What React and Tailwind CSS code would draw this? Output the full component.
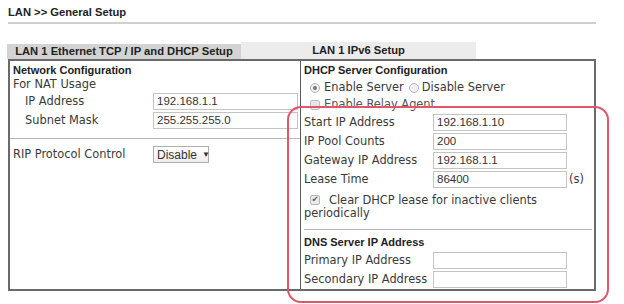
import React from "react";

const verd = { fontFamily: '"DejaVu Sans", Verdana, sans-serif' };
const ari = { fontFamily: '"Liberation Sans", Arial, sans-serif' };

function Input({ value = "", w = "w-[134px]" }) {
  return (
    <div
      className={`${w} h-[17px] border border-[#c4c4c4] bg-white flex items-center pl-[3px] text-[11.5px] text-[#333] leading-none`}
      style={ari}
    >
      {value}
    </div>
  );
}

function Radio({ checked }) {
  return (
    <span className="w-[10px] h-[10px] rounded-full border border-[#b5b5b5] bg-[#f1f1f1] flex items-center justify-center">
      {checked && <span className="w-[4px] h-[4px] rounded-full bg-[#777]" />}
    </span>
  );
}

function Row({ label, children, lw = "w-[129px]", indent = false }) {
  return (
    <div className="h-[19px] flex items-center">
      <div className={`${indent ? "pl-[12px]" : ""} ${lw} text-[11.4px] text-[#3a3a3a] whitespace-nowrap`} style={verd}>
        {label}
      </div>
      {children}
    </div>
  );
}

export default function App() {
  return (
    <div className="w-[624px] h-[304px] bg-white relative overflow-hidden" style={ari}>
      <div className="pl-[8px] pt-[3px] h-[22px] text-[11.2px] font-bold text-[#222] flex items-center">
        LAN &gt;&gt; General Setup
      </div>
      <div className="ml-[8px] w-[588px] h-[2px] bg-[#d0d0d0]" />
      <div className="h-[18px]" />
      {/* tabs */}
      <div className="flex items-end h-[17px] pl-[7px]">
        <div className="w-[234px] h-[15px] bg-[#d3d3d3] flex items-center justify-center text-[11.2px] font-bold text-[#222]">
          LAN 1 Ethernet TCP / IP and DHCP Setup
        </div>
        <div className="w-[235px] h-[17px] bg-[#ececec] flex items-center justify-center text-[11.2px] font-bold text-[#222]">
          LAN 1 IPv6 Setup
        </div>
      </div>
      {/* box */}
      <div className="ml-[8px] w-[588px] h-[232px] border-2 border-[#6a6a6a] flex">
        {/* left */}
        <div className="w-[291px] h-full border-r border-[#5a5a5a] flex flex-col">
          <div className="h-[17px] pl-[3px] pt-[1px] flex items-center text-[11px] font-bold text-[#222]">
            Network Configuration
          </div>
          <div className="h-[14px] pl-[3px] flex items-center text-[11.4px] text-[#3a3a3a]" style={verd}>
            For NAT Usage
          </div>
          <div className="pl-[3px]">
            <Row label="IP Address" indent lw="w-[140px]">
              <Input value="192.168.1.1" w="w-[145px]" />
            </Row>
            <Row label="Subnet Mask" indent lw="w-[140px]">
              <Input value="255.255.255.0" w="w-[145px]" />
            </Row>
          </div>
          <div className="mt-[8px] h-px bg-[#b8b8b8]" />
          <div className="pl-[3px] mt-[6px]">
            <Row label="RIP Protocol Control" lw="w-[140px]">
              <div
                className="w-[56px] h-[17px] border border-[#adadad] bg-gradient-to-b from-white to-[#eeeeee] flex items-center pl-[3px] gap-[5px] text-[12px] text-[#333]"
                style={ari}
              >
                Disable <span className="text-[8px]">▼</span>
              </div>
            </Row>
          </div>
        </div>
        {/* right */}
        <div className="flex-1 h-full flex flex-col pl-[3px]">
          <div className="h-[18px] flex items-center text-[11px] font-bold text-[#222]">
            DHCP Server Configuration
          </div>
          <div className="h-[18px] flex items-center pl-[6px] text-[11.4px] text-[#3a3a3a]" style={verd}>
            <Radio checked />
            <span className="ml-[4px]">Enable Server</span>
            <span className="ml-[5px]"><Radio /></span>
            <span className="ml-[3px]">Disable Server</span>
          </div>
          <div className="h-[16px] flex items-center pl-[6px] text-[11.4px] text-[#555]" style={verd}>
            <span className="w-[10px] h-[10px] rounded-[2px] border border-[#c0c0c0] bg-[#e6e6e6]" />
            <span className="ml-[4px]">Enable Relay Agent</span>
          </div>
          <Row label="Start IP Address">
            <Input value="192.168.1.10" />
          </Row>
          <Row label="IP Pool Counts">
            <Input value="200" />
          </Row>
          <Row label="Gateway IP Address">
            <Input value="192.168.1.1" />
          </Row>
          <Row label="Lease Time">
            <Input value="86400" />
            <span className="ml-[2px] text-[11.4px] text-[#3a3a3a]" style={verd}>(s)</span>
          </Row>
          <div className="flex pl-[6px] pt-[5px] text-[11.4px] text-[#3a3a3a] leading-[13px]" style={verd}>
            <span className="mt-[1px] w-[10px] h-[10px] rounded-[2px] border border-[#b5b5b5] bg-[#eaeaea] flex items-center justify-center text-[8px] text-[#555] leading-none shrink-0">
              ✔
            </span>
            <span className="ml-[9px]">Clear DHCP lease for inactive clients</span>
          </div>
          <div className="text-[11.4px] text-[#3a3a3a] leading-[13px]" style={verd}>periodically</div>
          <div className="mt-[9px] mr-[2px] h-px bg-[#b8b8b8]" />
          <div className="h-[21px] flex items-center pt-[3px] text-[11px] font-bold text-[#222]">
            DNS Server IP Address
          </div>
          <Row label="Primary IP Address">
            <Input />
          </Row>
          <Row label="Secondary IP Address">
            <Input />
          </Row>
        </div>
      </div>
      {/* annotation */}
      <div className="absolute left-[287px] top-[106px] w-[322px] h-[197px] border-2 border-[#e0566a] rounded-[14px] pointer-events-none" />
    </div>
  );
}
